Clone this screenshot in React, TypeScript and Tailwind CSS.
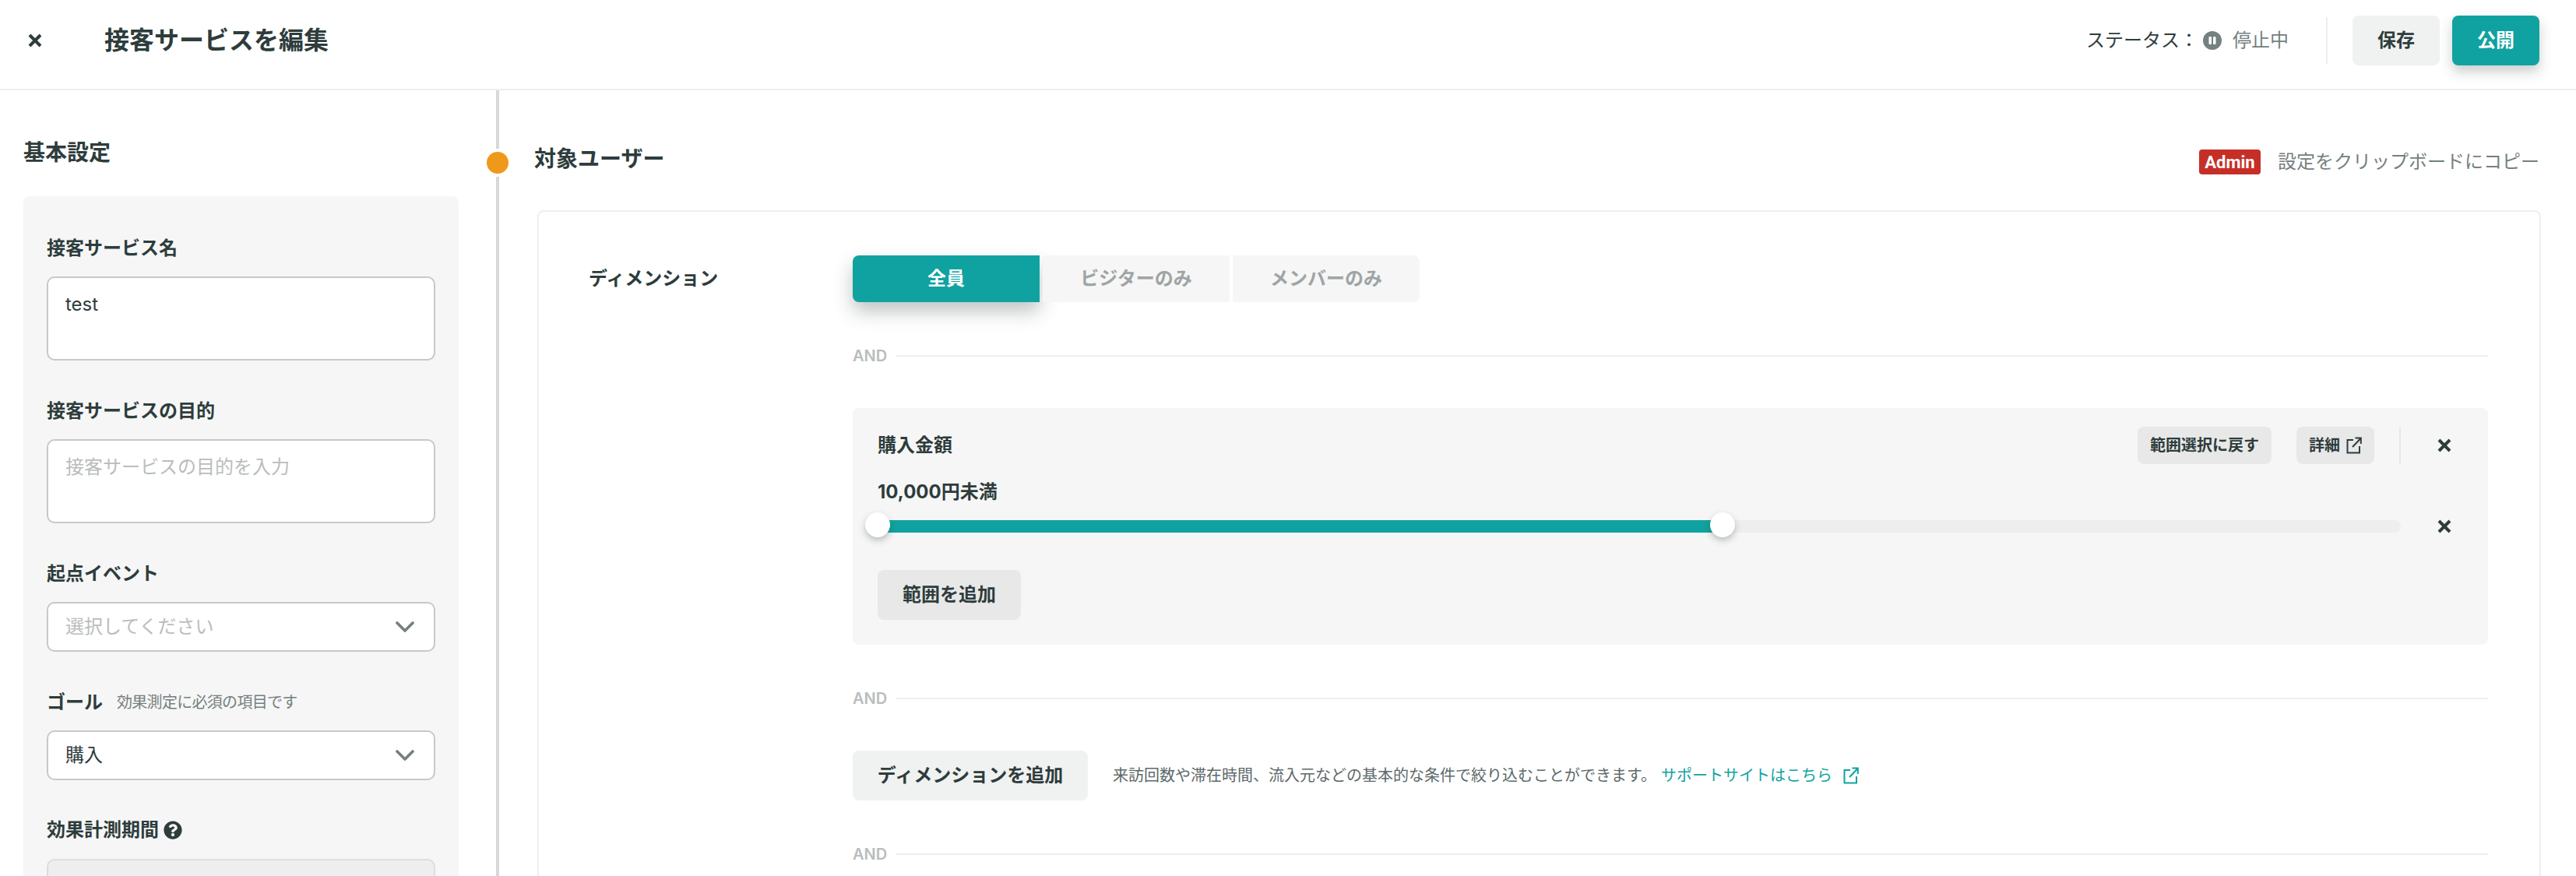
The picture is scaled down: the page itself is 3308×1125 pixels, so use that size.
import { ChevronDown } from "lucide-react";
import { FaQuestionCircle } from "react-icons/fa";

const CloseIcon = () => (
    <svg width="18" height="18" viewBox="0 0 18 18" className="shrink-0">
        <path d="M2 2L16 16M16 2L2 16" stroke="#2e3c3c" strokeWidth="4" fill="none"/>
    </svg>
);

const ExternalIcon = ({color}: { color: string }) => (
    <svg width="20" height="22" viewBox="0 0 20 22" className="shrink-0">
        <path d="M9 4H1.5v16.5H17V12M8 13L18.5 2M11.5 1.5H18.8V9" stroke={color} strokeWidth="2" fill="none"/>
    </svg>
);

const PauseIcon = () => (
    <svg width="24" height="24" viewBox="0 0 24 24" className="shrink-0">
        <circle cx="12" cy="12" r="12" fill="#758080"/>
        <rect x="7.5" y="7" width="3.5" height="10" rx="1" fill="#fff"/>
        <rect x="13" y="7" width="3.5" height="10" rx="1" fill="#fff"/>
    </svg>
);

const AndLine = ({className}: { className: string }) => (
    <div className={`flex items-center gap-3 ${className}`}>
        <span className="text-[20px] leading-[24px] font-semibold text-[#b9bdbd]">AND</span>
        <div className="h-[2px] flex-1 bg-[#eeeeee]"/>
    </div>
);

const SelectBox = ({text, placeholder}: { text: string; placeholder?: boolean }) => (
    <div className="mt-[18px] flex h-[64px] w-[499px] items-center justify-between rounded-[10px] border-2 border-[#c8c8c8] bg-white pl-[22px] pr-[17px]">
        <span className={`text-[24px] font-normal ${placeholder ? "text-[#b9bdbd]" : "text-[#2e3c3c]"}`}>{text}</span>
        <ChevronDown size={40} strokeWidth={2.2} color="#758080"/>
    </div>
);

const TextBox = ({value, placeholder}: { value?: string; placeholder?: string }) => (
    <textarea
        readOnly
        value={value ?? ""}
        placeholder={placeholder}
        className="mt-[18px] block h-[108px] w-[499px] resize-none rounded-[10px] border-2 border-[#c8c8c8] bg-white px-[22px] py-[16px] text-[24px] font-normal leading-[36px] text-[#2e3c3c] outline-none placeholder:text-[#b9bdbd]"
    />
);

const Label = ({children}: { children: React.ReactNode }) => (
    <div className="text-[24px] font-bold leading-[36px] text-[#2e3c3c]">{children}</div>
);

export default function App() {
    return (
        <div className="flex h-[1125px] w-[3308px] flex-col overflow-hidden bg-white font-['Inter','Noto_Sans_CJK_JP',sans-serif] text-[#2e3c3c]">
            <header className="flex h-[116px] shrink-0 items-center justify-between border-b-2 border-[#eeeeee] pb-[10px] pl-[36px] pr-[47px]">
                <div className="flex items-center">
                    <CloseIcon/>
                    <h1 className="ml-[80px] text-[32px] font-bold leading-[48px]">接客サービスを編集</h1>
                </div>
                <div className="flex items-center">
                    <span className="text-[24px] font-normal">ステータス：</span>
                    <span className="ml-[6px]"><PauseIcon/></span>
                    <span className="ml-[14px] text-[24px] text-[#758080]">停止中</span>
                    <div className="ml-[48px] h-[60px] w-[2px] bg-[#eeeeee]"/>
                    <button className="ml-[32px] h-[64px] w-[112px] rounded-[8px] bg-[#f0f1f1] text-[24px] font-bold">保存</button>
                    <button className="ml-[16px] h-[64px] w-[112px] rounded-[8px] bg-[#10a2a0] text-[24px] font-bold text-white shadow-[0_8px_16px_rgba(46,60,60,0.25)]">公開</button>
                </div>
            </header>

            <div className="flex min-h-0 flex-1">
                <aside className="w-[637px] shrink-0 pl-[30px] pr-[48px] pt-[62px]">
                    <h2 className="text-[28px] font-bold leading-[36px]">基本設定</h2>
                    <div className="mt-[38px] h-[900px] rounded-[8px] bg-[#f6f6f6] px-[30px] pt-[49px]">
                        <Label>接客サービス名</Label>
                        <TextBox value="test"/>
                        <div className="mt-[47px]"><Label>接客サービスの目的</Label></div>
                        <TextBox placeholder="接客サービスの目的を入力"/>
                        <div className="mt-[47px]"><Label>起点イベント</Label></div>
                        <SelectBox text="選択してください" placeholder/>
                        <div className="mt-[47px] flex items-center">
                            <Label>ゴール</Label>
                            <span className="ml-[18px] text-[20px] font-normal tracking-[-0.7px] text-[#758080]">効果測定に必須の項目です</span>
                        </div>
                        <SelectBox text="購入"/>
                        <div className="mt-[46px] flex items-center gap-[6px]">
                            <Label>効果計測期間</Label>
                            <FaQuestionCircle size={24} color="#2e3c3c"/>
                        </div>
                        <div className="mt-[19px] h-[64px] w-[499px] rounded-[10px] border-2 border-[#dddddd] bg-[#eeeeee]"/>
                    </div>
                </aside>

                <main className="relative flex-1 border-l-4 border-[#d8d8d8] pl-[49px] pr-[45px]">
                    {/* Timeline dot sits over the vertical line */}
                    <div className="absolute left-[-20px] top-[75px] h-[36px] w-[36px] rounded-full border-4 border-white bg-[#f0981a]"/>

                    <div className="flex h-[154px] items-start justify-between pt-[67px]">
                        <h2 className="ml-[-4px] text-[28px] font-bold leading-[42px]">対象ユーザー</h2>
                        <div className="mr-[2px] mt-[7px] flex items-center">
                            <span className="flex h-[32px] w-[79px] items-center justify-center rounded-[4px] bg-[#c62f28] font-['Roboto','Noto_Sans_CJK_JP',sans-serif] text-[22px] font-bold text-white">Admin</span>
                            <span className="ml-[22px] text-[24px] font-normal text-[#758080]">設定をクリップボードにコピー</span>
                        </div>
                    </div>

                    <section className="flex h-[900px] rounded-[8px] border-2 border-[#eeeeee] pl-[64px] pr-[66px] pt-[56px]">
                        <div className="w-[339px] shrink-0 pt-[12px] text-[24px] font-bold leading-[36px]">ディメンション</div>
                        <div className="min-w-0 flex-1">
                            <div className="flex gap-[4px]">
                                <button className="h-[60px] w-[240px] rounded-l-[8px] bg-[#10a2a0] text-[24px] font-bold text-white shadow-[0_12px_24px_rgba(46,60,60,0.3)]">全員</button>
                                <button className="h-[60px] w-[240px] bg-[#f6f6f6] text-[24px] font-bold text-[#9ea5a5]">ビジターのみ</button>
                                <button className="h-[60px] w-[240px] rounded-r-[8px] bg-[#f6f6f6] text-[24px] font-bold text-[#9ea5a5]">メンバーのみ</button>
                            </div>

                            <AndLine className="mt-[57px]"/>

                            <div className="mt-[55px] h-[304px] rounded-[8px] bg-[#f6f6f6] pl-[32px] pr-[47px] pt-[24px]">
                                <div className="flex items-center">
                                    <span className="text-[24px] font-bold leading-[36px]">購入金額</span>
                                    <button className="ml-auto h-[48px] w-[172px] rounded-[8px] bg-[#e8e8e8] text-[20px] font-bold">範囲選択に戻す</button>
                                    <button className="ml-[32px] flex h-[48px] w-[100px] items-center justify-center gap-[8px] rounded-[8px] bg-[#e8e8e8] text-[20px] font-bold">
                                        詳細
                                        <ExternalIcon color="#2e3c3c"/>
                                    </button>
                                    <div className="ml-[32px] h-[48px] w-[2px] bg-[#e8e8e8]"/>
                                    <span className="ml-[47px]"><CloseIcon/></span>
                                </div>

                                <div className="mt-[18px] text-[24px] font-bold leading-[36px]">10,000円未満</div>

                                <div className="mt-[17px] flex items-center">
                                    <div className="relative h-[16px] w-[1956px] rounded-full bg-[#eeeeee]">
                                        <div className="h-full w-[1085px] bg-[#10a2a0]"/>
                                        {/* Slider handles lie over the track */}
                                        <div className="absolute left-[-16px] top-[-10px] h-[32px] w-[32px] rounded-full bg-white shadow-[0_4px_8px_rgba(46,60,60,0.3)]"/>
                                        <div className="absolute left-[1069px] top-[-10px] h-[32px] w-[32px] rounded-full bg-white shadow-[0_4px_8px_rgba(46,60,60,0.3)]"/>
                                    </div>
                                    <span className="ml-[47px]"><CloseIcon/></span>
                                </div>

                                <button className="mt-[47px] h-[64px] w-[184px] rounded-[8px] bg-[#e8e8e8] text-[24px] font-bold">範囲を追加</button>
                            </div>

                            <AndLine className="mt-[57px]"/>

                            <div className="mt-[55px] flex items-center">
                                <button className="h-[64px] w-[302px] rounded-[8px] bg-[#f0f1f1] text-[24px] font-bold">ディメンションを追加</button>
                                <span className="ml-[32px] text-[20px] font-normal text-[#5d6a6a]">来訪回数や滞在時間、流入元などの基本的な条件で絞り込むことができます。</span>
                                <span className="ml-[6px] text-[20px] text-[#10a2a0]">サポートサイトはこちら</span>
                                <span className="ml-[14px]"><ExternalIcon color="#10a2a0"/></span>
                            </div>

                            <AndLine className="mt-[57px]"/>
                        </div>
                    </section>
                </main>
            </div>
        </div>
    );
}
